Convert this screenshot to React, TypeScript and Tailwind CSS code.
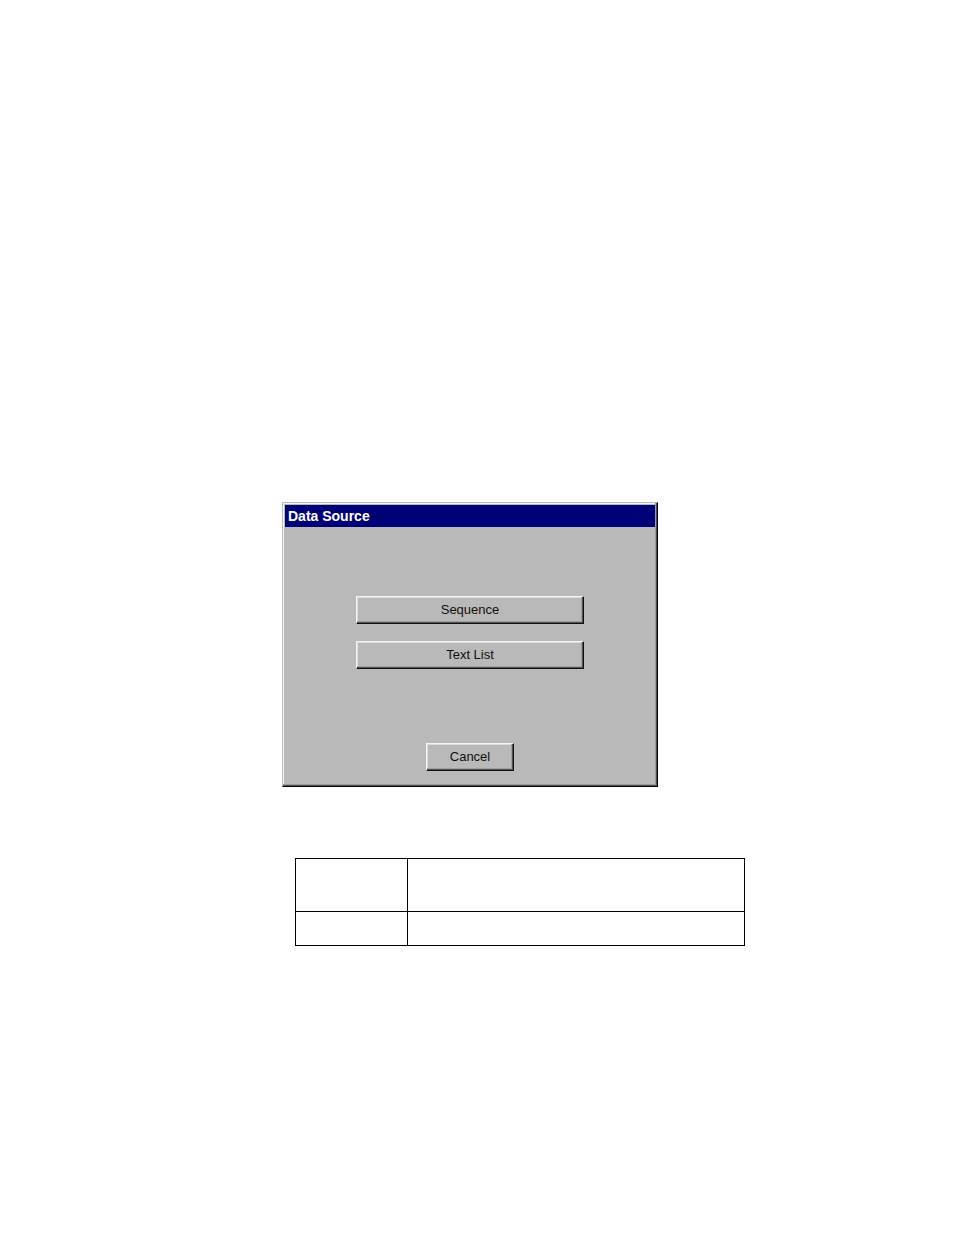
import type { ReactNode } from 'react'

interface DialogButtonProps {
  children: ReactNode
  className: string
}

function DialogButton({ children, className }: DialogButtonProps) {
  return (
    <button
      type="button"
      className={`h-7 border border-t-[#f4f4f4] border-l-[#f4f4f4] border-r-[#101010] border-b-[#101010] bg-[#b9b9b9] pb-px text-[13px] leading-5 text-[#101010] shadow-[inset_-1px_-1px_0_#505050,inset_-2px_-2px_0_#a0a0a0,inset_1px_1px_0_#dcdcdc] ${className}`}
    >
      {children}
    </button>
  )
}

function DataSourceDialog() {
  return (
    <section
      role="dialog"
      aria-labelledby="dialog-title"
      className="w-full max-w-[376px] border border-t-[#b9beb9] border-l-[#b9beb9] border-r-black border-b-black bg-[#b9b9b9] p-0.5 shadow-[inset_-1px_-1px_0_#505050,inset_-2px_-2px_0_#9a9a9a,inset_1px_1px_0_#f4f4f4]"
    >
      <h1 id="dialog-title" className="h-[22px] bg-[#000078] px-[3px] text-sm leading-[22px] font-bold text-white">
        Data Source
      </h1>
      <div className="flex flex-col items-center pt-[69px] pb-[13px]">
        <DialogButton className="w-full max-w-[228px]">Sequence</DialogButton>
        <DialogButton className="mt-[17px] w-full max-w-[228px]">Text List</DialogButton>
        <DialogButton className="mt-[74px] w-[88px]">Cancel</DialogButton>
      </div>
    </section>
  )
}

export default function App() {
  return (
    <main className="min-h-screen bg-white pt-[502px] pr-4 pb-16 pl-[282px] font-['Liberation_Sans',Arial,sans-serif]">
      <DataSourceDialog />
      {/* empty two-column table below the dialog */}
      <table
        aria-label="Data sources"
        className="mt-[71px] ml-[13px] w-full max-w-[450px] table-fixed border-collapse border border-black"
      >
        <tbody>
          <tr className="h-[53px]">
            <td className="w-1/4 border border-black" />
            <td className="border border-black" />
          </tr>
          <tr className="h-[34px]">
            <td className="border border-black" />
            <td className="border border-black" />
          </tr>
        </tbody>
      </table>
    </main>
  )
}
